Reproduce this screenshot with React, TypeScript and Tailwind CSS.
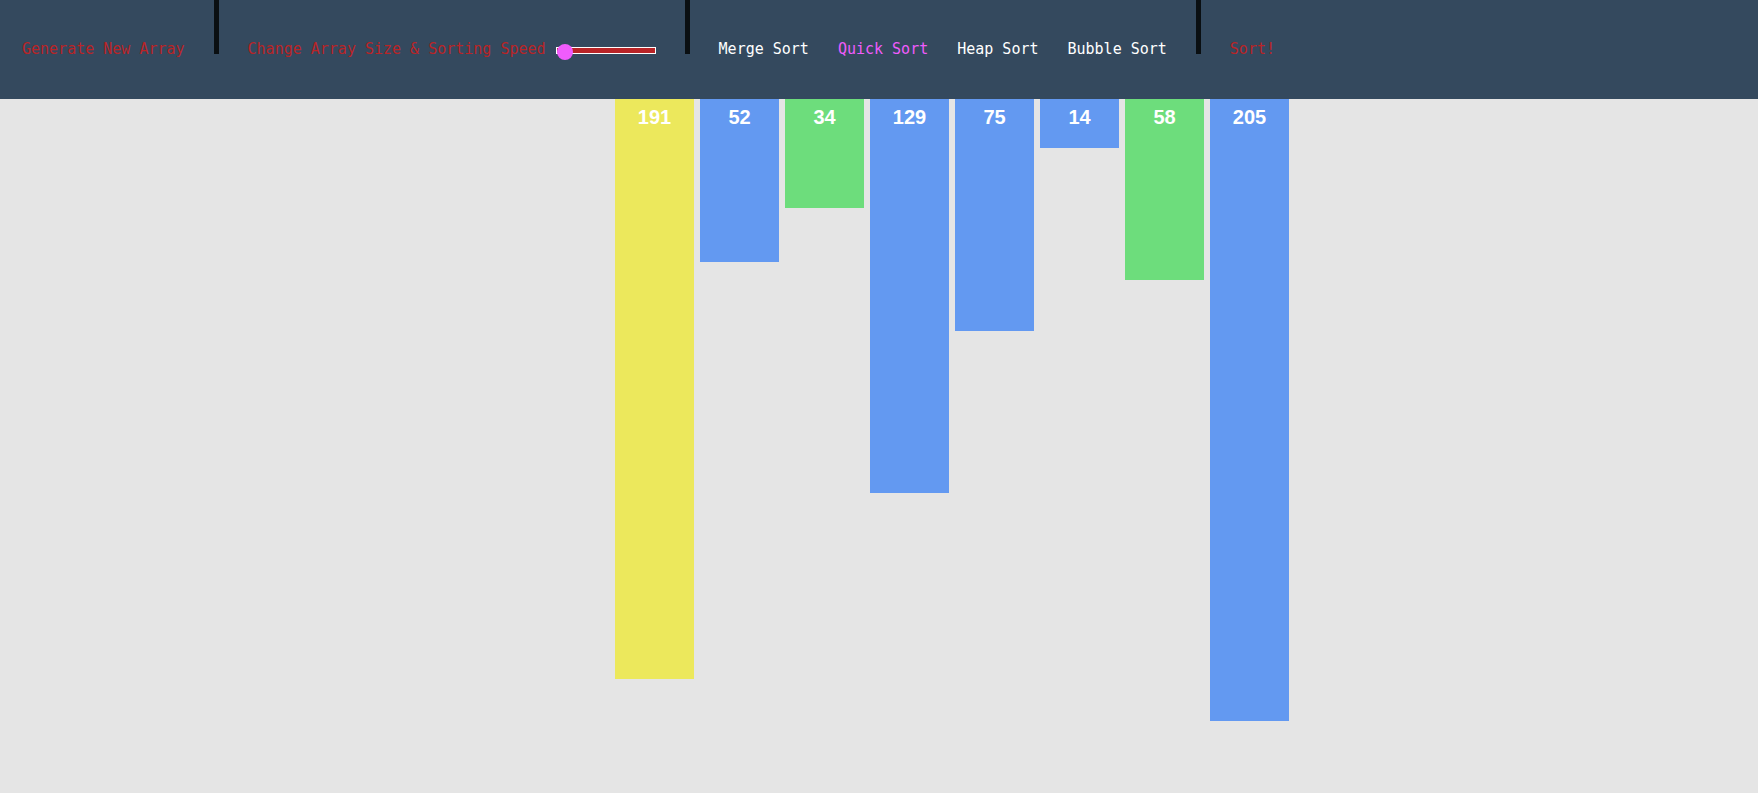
import { useState } from 'react';

type BarState = 'idle' | 'compared' | 'pivot';

const bars: { value: number; state: BarState }[] = [
  { value: 191, state: 'pivot' },
  { value: 52, state: 'idle' },
  { value: 34, state: 'compared' },
  { value: 129, state: 'idle' },
  { value: 75, state: 'idle' },
  { value: 14, state: 'idle' },
  { value: 58, state: 'compared' },
  { value: 205, state: 'idle' },
];

const barColors: Record<BarState, string> = {
  idle: 'bg-[#6399f1]',
  compared: 'bg-[#6ddd7c]',
  pivot: 'bg-[#ece85c]',
};

const algorithms = ['Merge Sort', 'Quick Sort', 'Heap Sort', 'Bubble Sort'];

function Divider() {
  return <div aria-hidden="true" className="h-[54px] w-[5px] shrink-0 bg-[#0a0f12]" />;
}

export default function App() {
  const [algorithm, setAlgorithm] = useState('Quick Sort');
  const [size, setSize] = useState(1);

  return (
    <div className="min-h-screen bg-[#e5e5e5]">
      <header className="flex h-[99px] items-start gap-[29px] bg-[#34495e] pl-[22px] font-['DejaVu_Sans_Mono',monospace] text-[15px] leading-5 whitespace-nowrap text-[#b92427]">
        <button type="button" className="mt-[39px] cursor-pointer">Generate New Array</button>
        <Divider />
        <div className="mt-[39px] flex items-start gap-[10px]">
          <label htmlFor="size">Change Array Size &amp; Sorting Speed</label>
          <input
            id="size"
            type="range"
            min={0}
            max={100}
            value={size}
            onChange={(e) => setSize(Number(e.target.value))}
            className="mt-2 h-[7px] w-[100px] cursor-pointer appearance-none border border-white bg-[#b92427] [&::-webkit-slider-thumb]:mt-[3px] [&::-webkit-slider-thumb]:size-4 [&::-webkit-slider-thumb]:appearance-none [&::-webkit-slider-thumb]:rounded-full [&::-webkit-slider-thumb]:bg-[#f05cfc]"
          />
        </div>
        <Divider />
        {algorithms.map((name) => (
          <button
            key={name}
            type="button"
            aria-pressed={name === algorithm}
            onClick={() => setAlgorithm(name)}
            className={`mt-[39px] cursor-pointer ${name === algorithm ? 'text-[#f05cfc]' : 'text-white'}`}
          >
            {name}
          </button>
        ))}
        <Divider />
        <button type="button" className="mt-[39px] cursor-pointer">Sort!</button>
      </header>
      <main className="flex items-start justify-center gap-[6px] pl-[146px] font-['Liberation_Sans',sans-serif] text-xl leading-6 font-bold text-white">
        {bars.map(({ value, state }, i) => (
          <div
            key={i}
            className={`w-[79px] pt-[6px] text-center ${barColors[state]}`}
            style={{ height: value * 3 + 7 }}
          >
            {value}
          </div>
        ))}
      </main>
    </div>
  );
}
